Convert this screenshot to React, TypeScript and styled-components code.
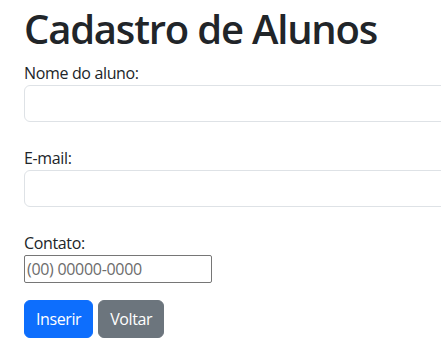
import styled, { createGlobalStyle } from 'styled-components';

const GlobalStyle = createGlobalStyle`
  html, body {
    margin: 0;
    padding: 0;
    background: #fff;
    overflow: hidden;
  }
  body {
    font-family: "Open Sans", "Noto Sans", sans-serif;
    font-size: 16px;
    line-height: 1.5;
    color: #212529;
  }
  * {
    box-sizing: border-box;
  }
`;

const Page = styled.main`
  padding: 5px 0 0 24px;
  width: 620px;
`;

const Title = styled.h1`
  margin: 0 0 8px;
  font-size: 40px;
  line-height: 48px;
  font-weight: 600;
  letter-spacing: -1.2px;
`;

const Form = styled.form`
  display: flex;
  flex-direction: column;
`;

const Group = styled.div`
  display: flex;
  flex-direction: column;
  align-items: flex-start;
  margin-bottom: 24px;
`;

const Label = styled.label`
  font-size: 16px;
  line-height: 24px;
  letter-spacing: -0.35px;
`;

const TextInput = styled.input`
  display: block;
  width: 560px;
  height: 37px;
  padding: 6px 12px;
  font: inherit;
  color: #212529;
  background: #fff;
  border: 1px solid #dee2e6;
  border-radius: 6px;
  outline: none;
`;

const PhoneInput = styled.input`
  width: 188px;
  height: 28px;
  padding: 1px 2px;
  font: inherit;
  font-size: 16px;
  letter-spacing: -0.3px;
  color: #212529;
  border: 1px solid #767676;
  border-radius: 2px;
  outline: none;

  &::placeholder {
    color: #6c6c6c;
  }
`;

const Actions = styled.div`
  display: flex;
  gap: 5px;
  margin-top: -7px;
`;

const Button = styled.button<{ $variant: 'primary' | 'secondary' }>`
  height: 38px;
  padding: 6px 11px;
  font: inherit;
  font-size: 16px;
  letter-spacing: -0.4px;
  line-height: 24px;
  color: #fff;
  border: 1px solid ${({ $variant }) => ($variant === 'primary' ? '#0d6efd' : '#6c757d')};
  background: ${({ $variant }) => ($variant === 'primary' ? '#0d6efd' : '#6c757d')};
  border-radius: 6px;
  cursor: pointer;
`;

export default function App() {
  return (
    <>
      <GlobalStyle />
      <Page>
        <Title>Cadastro de Alunos</Title>
        <Form onSubmit={(e) => e.preventDefault()}>
          <Group>
            <Label htmlFor="nome">Nome do aluno:</Label>
            <TextInput id="nome" type="text" />
          </Group>
          <Group>
            <Label htmlFor="email">E-mail:</Label>
            <TextInput id="email" type="email" />
          </Group>
          <Group>
            <Label htmlFor="contato">Contato:</Label>
            <PhoneInput id="contato" type="tel" placeholder="(00) 00000-0000" />
          </Group>
          <Actions>
            <Button type="submit" $variant="primary">Inserir</Button>
            <Button type="button" $variant="secondary">Voltar</Button>
          </Actions>
        </Form>
      </Page>
    </>
  );
}
